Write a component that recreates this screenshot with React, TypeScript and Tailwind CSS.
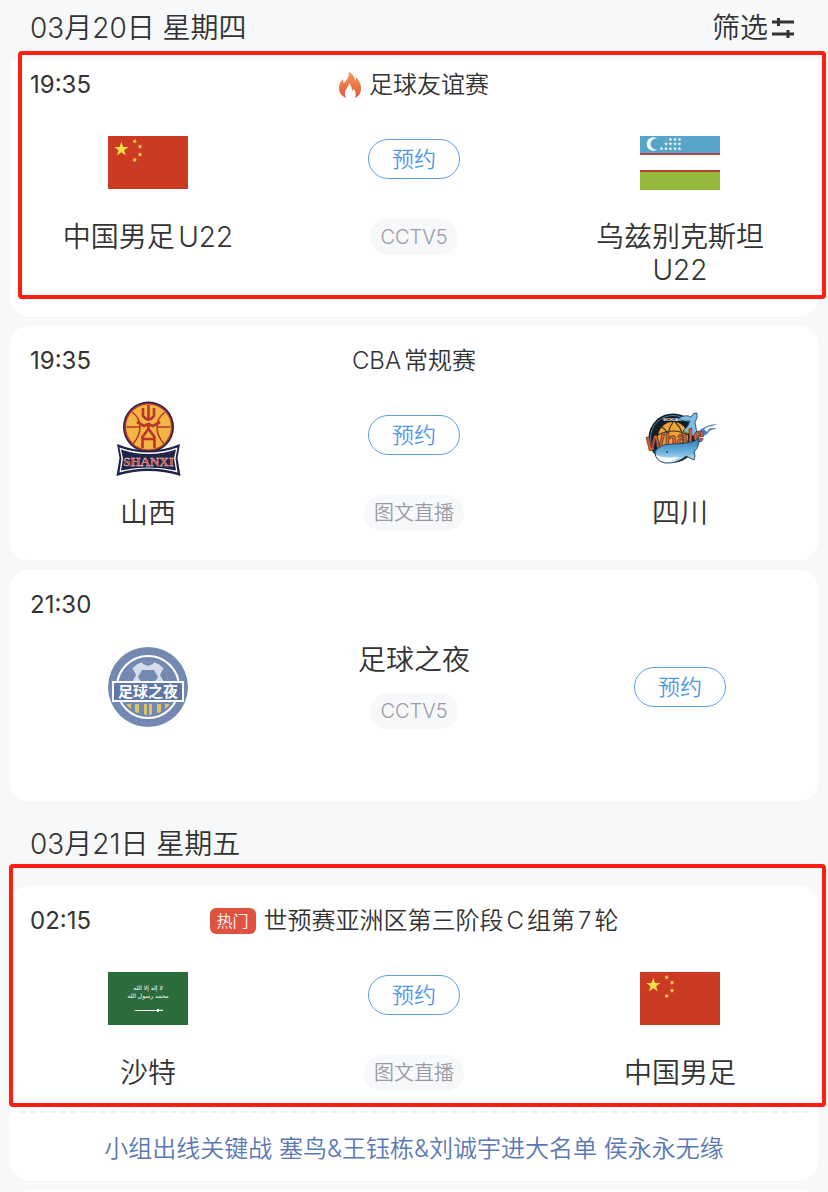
import type { ReactNode } from "react";

const STAR = "0,-10 2.4,-3.2 9.5,-3.1 3.8,1.2 5.9,8.1 0,4 -5.9,8.1 -3.8,1.2 -9.5,-3.1 -2.4,-3.2";

const ChinaFlag = () => (
  <svg viewBox="0 0 80 54" className="w-20" role="img" aria-label="中国">
    <rect width="80" height="53" fill="#cb3a23" />
    <g fill="#fbdc4a">
      <polygon points={STAR} transform="translate(13.3 13.3) scale(.75)" />
      <polygon points={STAR} transform="translate(26.7 5.3) rotate(20) scale(.26)" />
      <polygon points={STAR} transform="translate(32 10.6) rotate(40) scale(.26)" />
      <polygon points={STAR} transform="translate(32 18.6) scale(.26)" />
      <polygon points={STAR} transform="translate(26.7 23.9) rotate(20) scale(.26)" />
    </g>
  </svg>
);

const UzbekistanFlag = () => (
  <svg viewBox="0 0 80 54" className="w-20" role="img" aria-label="乌兹别克斯坦">
    <rect width="80" height="54" fill="#fff" />
    <rect width="80" height="17" fill="#57a5c9" />
    <rect y="17" width="80" height="2" fill="#b5434a" />
    <rect y="34" width="80" height="2" fill="#b8402c" />
    <rect y="36" width="80" height="18" fill="#92b93c" />
    <circle cx="13.5" cy="8" r="6.8" fill="#fff" />
    <circle cx="16.2" cy="8" r="5.7" fill="#57a5c9" />
    {[
      [3.4, [30.5, 35, 39.5]],
      [8, [26, 30.5, 35, 39.5]],
      [12.6, [21.5, 26, 30.5, 35, 39.5]],
    ].map(([y, xs]) =>
      (xs as number[]).map((x) => (
        <polygon key={`${x}-${y}`} points={STAR} transform={`translate(${x} ${y}) scale(.2)`} fill="#fff" />
      ))
    )}
  </svg>
);

const SaudiFlag = () => (
  <svg viewBox="0 0 80 54" className="w-20" role="img" aria-label="沙特">
    <rect width="80" height="53" fill="#2c6b3c" />
    <g fill="#fff" fontFamily="DejaVu Sans, sans-serif" fontWeight="400" fontSize="6" textAnchor="middle">
      <text x="40" y="18">لا إله إلا الله</text>
      <text x="40" y="26">محمد رسول الله</text>
    </g>
    <path d="M26 38h23v-.9h2v.6h4v1.400h-4v.6h-2V39H28z" fill="#fff" />
  </svg>
);

const ShanxiLogo = () => (
  <svg viewBox="0 0 80 80" className="w-20" role="img" aria-label="山西">
    <circle cx="40.500" cy="28" r="25.500" fill="#1f2449" />
    <circle cx="40.500" cy="28" r="24" fill="#b8342d" />
    <circle cx="40.500" cy="28" r="22.500" fill="#f3b644" />
    <g fill="none" stroke="#b8342d" strokeWidth="1.500">
      <path d="M18.500 28H32M49 28h13.500M24 13q8 6 8 15t-7 17M57 13q-8 6-8 15t7 17" />
    </g>
    <g fill="none" stroke="#b8342d" strokeWidth="2.600">
      <path d="M35 9v8l3 3h5l3-3V9M40.500 6v16M29 23l7 4 4.500-2 4.500 2 7-4M40.500 25v7M34.500 49V38l6-8 6 8v11M35 40h11" />
    </g>
    <path d="M9 45q31.500 13 63 0l-2.500 14 3 18q-32-10-64 0l3-18z" fill="#1f2449" />
    <path d="M11.500 48.500q29 10 58 0l-2 11 2 14q-29-8-58 0l2-14z" fill="#fff" />
    <path d="M13 50.500q27.500 9 55 0l-2 9 2 12q-27.500-6-55 0l2-12z" fill="#1f2449" />
    <text
      x="40.500"
      y="67"
      textAnchor="middle"
      fontFamily="Liberation Serif, serif"
      fontWeight="700"
      fontSize="13"
      fill="#d0483f"
      stroke="#f4dede"
      strokeWidth=".3"
    >
      SHANXI
    </text>
  </svg>
);

const SichuanLogo = () => (
  <svg viewBox="0 0 80 80" className="w-20" role="img" aria-label="四川">
    <defs>
      <linearGradient id="whale" x1="0" y1="0" x2="0" y2="1">
        <stop offset="0" stopColor="#2477b3" />
        <stop offset=".6" stopColor="#72b4de" />
        <stop offset="1" stopColor="#e6f2f9" />
      </linearGradient>
    </defs>
    <path d="M58 33q8-8 20-8-8 2-9 5 4-2 8 0-7 0-9 4-4 4-10 4z" fill="#4b7fc4" />
    <path d="M64 30q4-3 9-3-4 2-6 6z" fill="#fff" />
    <circle cx="33" cy="39" r="24.500" fill="#161c24" />
    <circle cx="33" cy="39" r="22.500" fill="none" stroke="#3f86a3" strokeWidth="1" />
    <text x="32" y="22" textAnchor="middle" fontFamily="Liberation Sans, sans-serif" fontWeight="700" fontSize="4" fill="#fff">
      SICHUAN
    </text>
    <circle cx="33" cy="38" r="15" fill="#eda53a" />
    <path d="M18 36q15-8 30 0M33 23q-7 10-5 22M35 23q9 8 8 21M22 28q7 4 6 16" fill="none" stroke="#3c2c19" strokeWidth="1.100" />
    <path d="M43 32q5-4 7-10-9 1-11-3 7-4 12-1 2-5 6-4 1 5-2 9 2 9 2 16z" fill="#7fbbe0" stroke="#19405f" strokeWidth=".8" />
    <g fontFamily="Liberation Sans, sans-serif" fontWeight="700" fontStyle="italic" fill="#e0603a" stroke="#402c2e" strokeWidth=".6">
      <text x="7" y="52" fontSize="20" transform="rotate(-10 7 52)">
        Whale
      </text>
    </g>
    <path d="M15 53q4-8 17-8 14 0 22-3 4-1 5-4 1 9-5 15 2 4 0 8l-8-4q-9 8-21 7-10-2-10-11z" fill="url(#whale)" stroke="#19405f" strokeWidth=".9" />
    <path d="M16 56q9 4 23 2-8 6-17 4-5-2-6-6z" fill="#fff" />
    <circle cx="27" cy="53" r=".9" fill="#19405f" />
  </svg>
);

const FootballNightLogo = () => (
  <svg viewBox="0 0 80 80" className="w-20" role="img" aria-label="足球之夜">
    <defs>
      <clipPath id="badge">
        <circle cx="40" cy="40" r="28" />
      </clipPath>
      <clipPath id="ball">
        <circle cx="40" cy="34" r="20" />
      </clipPath>
    </defs>
    <circle cx="40" cy="40" r="40" fill="#7489b1" />
    <circle cx="40" cy="40" r="31" fill="#7489b1" stroke="#fff" strokeWidth="2" />
    <g clipPath="url(#ball)">
      <circle cx="40" cy="34" r="20" fill="#d5dcea" />
      <path d="M34 23h12l4 7-4 6H34l-4-6zM33 12h14l-2 5-5 2-5-2zM18 24l7-2 3 6-4 7-6 1zM62 24l-7-2-3 6 4 7 6 1z" fill="#7489b1" />
    </g>
    <g clipPath="url(#badge)">
      <path d="M10 54h60v20H10z" fill="#7489b1" />
      <path d="M19 57h4v20h-4zM27 57h4v20h-4zM49 57h4v20h-4zM57 57h4v20h-4zM36 57h8v20h-8z" fill="#d9c565" />
      <path d="M39 57h2v20h-2z" fill="#7489b1" />
    </g>
    <path d="M4 34h72v21H4z" fill="#fff" />
    <path d="M6 36h68v17H6z" fill="#5f77a4" />
    <text x="40" y="50" textAnchor="middle" fontFamily="Noto Sans CJK SC, sans-serif" fontWeight="700" fontSize="15" fill="#fff">
      足球之夜
    </text>
  </svg>
);

const FlameIcon = () => (
  <svg viewBox="0 0 22 26" className="h-[26px] w-[22px]" aria-hidden="true">
    <defs>
      <linearGradient id="flame" x1="0" y1="0" x2="0" y2="1">
        <stop offset="0" stopColor="#f39a58" />
        <stop offset="1" stopColor="#e2573c" />
      </linearGradient>
    </defs>
    <path
      d="M10 0c4 2 6 5 6 9 1-1 1-2 1-4 3 3 5 7 5 11 0 5-2 8-6 10 1-3 1-6-1-9-1 1-1 1-2 2 0-3-1-6-3-8 0 4-4 6-4 10 0 2 0 3 1 5-4-2-7-5-7-10 0-4 2-7 4-9 0 2 0 3 1 4 3-3 5-6 5-11z"
      fill="url(#flame)"
    />
  </svg>
);

const FilterIcon = () => (
  <svg viewBox="0 0 22 20" className="h-5 w-[22px]" aria-hidden="true">
    <path d="M0 4h22M6.500 0v8M0 16h22M16 12v8" fill="none" stroke="#333" strokeWidth="3" />
  </svg>
);

const ReserveButton = () => (
  <button className="h-10 w-[92px] rounded-full border border-[#5a9ee8] text-[22px] leading-none text-[#4f98ea]">
    预约
  </button>
);

const Channel = ({ children }: { children: ReactNode }) => (
  <span className="flex h-9 items-center rounded-full bg-[#f7f8fa] px-[10px] text-[20px] leading-none text-[#9b9ca5]">
    {children}
  </span>
);

const TitleRow = ({ time, children }: { time: string; children?: ReactNode }) => (
  <div className="flex h-[30px] items-center px-5 text-[24px]">
    <time className="w-[80px] font-normal">{time}</time>
    <h3 className="flex flex-1 items-center justify-center gap-2 whitespace-nowrap">{children}</h3>
    <div className="w-[80px]" />
  </div>
);

const Team = ({ logo, name }: { logo: ReactNode; name: string }) => (
  <div className="flex flex-col items-center">
    <div className="flex h-20 items-center">{logo}</div>
    <p className="mt-[18px] max-w-[190px] text-center text-[28px] leading-[33px]">{name}</p>
  </div>
);

type MatchProps = {
  home: ReactNode;
  away: ReactNode;
  channel: string;
};

const Match = ({ home, away, channel }: MatchProps) => (
  <div className="grid grid-cols-3 px-[5px] pt-[23px]">
    {home}
    <div className="flex flex-col items-center gap-10 pt-4">
      <ReserveButton />
      <Channel>{channel}</Channel>
    </div>
    {away}
  </div>
);

const App = () => {
  return (
    <main className="min-h-screen overflow-hidden bg-[#f7f8fa] px-[10px] font-[350] text-[#333] [font-family:Inter,'Noto_Sans_CJK_SC',sans-serif] [text-autospace:normal]">
      <header className="flex h-[60px] items-center justify-between px-5 pb-1 text-[28px]">
        <h2 className="[text-autospace:no-autospace]">03月20日 星期四</h2>
        <button className="mr-1 flex items-center gap-1">
          筛选
          <FilterIcon />
        </button>
      </header>

      <section className="relative rounded-b-[18px] bg-white pt-[10px] pb-[29px]">
        <TitleRow time="19:35">
          <FlameIcon />
          足球友谊赛
        </TitleRow>
        <Match
          home={<Team logo={<ChinaFlag />} name="中国男足U22" />}
          away={<Team logo={<UzbekistanFlag />} name="乌兹别克斯坦U22" />}
          channel="CCTV5"
        />
        <div className="pointer-events-none absolute -top-[9px] -right-2 bottom-[17px] left-2 rounded-[4px] border-4 border-[#ff1e12]" />
      </section>

      <section className="mt-[10px] rounded-[18px] bg-white pt-5 pb-[29px]">
        <TitleRow time="19:35">CBA常规赛</TitleRow>
        <Match
          home={<Team logo={<ShanxiLogo />} name="山西" />}
          away={<Team logo={<SichuanLogo />} name="四川" />}
          channel="图文直播"
        />
      </section>

      <section className="mt-[10px] rounded-[18px] bg-white pt-5 pb-[72px]">
        <TitleRow time="21:30" />
        <div className="grid grid-cols-3 items-center px-[5px] pt-6">
          <div className="flex justify-center">
            <FootballNightLogo />
          </div>
          <div className="flex flex-col items-center gap-4">
            <h3 className="text-[28px] leading-[33px]">足球之夜</h3>
            <Channel>CCTV5</Channel>
          </div>
          <div className="flex justify-center">
            <ReserveButton />
          </div>
        </div>
      </section>

      <h2 className="flex h-[85px] items-center px-5 text-[28px] [text-autospace:no-autospace]">03月21日 星期五</h2>

      <section className="relative rounded-[18px] bg-white pt-5">
        <TitleRow time="02:15">
          <span className="flex h-[26px] items-center rounded-md bg-[#e05140] px-[7px] text-[16px] leading-none text-white">
            热门
          </span>
          世预赛亚洲区第三阶段C组第7轮
        </TitleRow>
        <Match
          home={<Team logo={<SaudiFlag />} name="沙特" />}
          away={<Team logo={<ChinaFlag />} name="中国男足" />}
          channel="图文直播"
        />
        <div className="mx-[10px] mt-5 border-t-2 border-dashed border-[#f1f1f3]" />
        <a href="#" className="flex h-[67px] items-center justify-center pt-1 text-[24px] text-[#5b78b5]">
          小组出线关键战 塞鸟&王钰栋&刘诚宇进大名单 侯永永无缘
        </a>
        <div className="pointer-events-none absolute -top-[22px] -right-2 bottom-[73px] -left-px rounded-[4px] border-4 border-[#ff1e12]" />
      </section>

      <section className="mt-[10px] h-10 rounded-[18px] bg-white" />
    </main>
  );
};

export default App;
